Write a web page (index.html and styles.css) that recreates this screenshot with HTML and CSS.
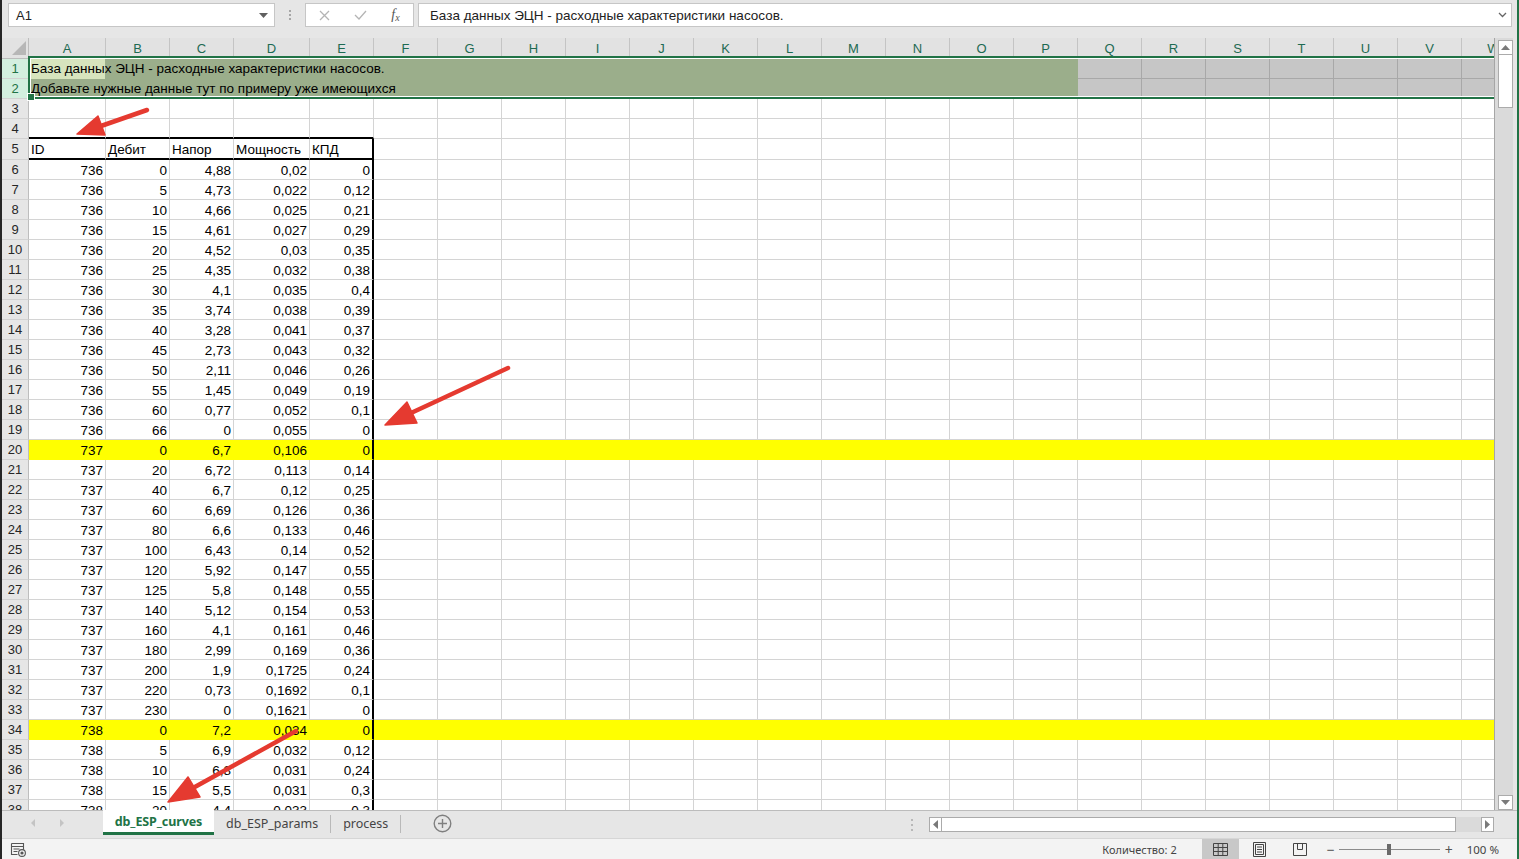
FILE: index.html
```html
<!DOCTYPE html>
<html lang="ru">
<head>
<meta charset="utf-8">
<title>db_ESP_curves</title>
<link rel="stylesheet" href="styles.css">
</head>
<body>
<div class="app">
  <div class="fbar">
    <div class="namebox"><span>A1</span><svg class="caret" width="9" height="5" viewBox="0 0 9 5"><path d="M0 0h9L4.5 5z"/></svg></div>
    <div class="fdots"><i></i><i></i><i></i></div>
    <div class="fbtns">
      <span class="fb"><svg width="11" height="11" viewBox="0 0 11 11"><path d="M1 1l9 9M10 1l-9 9"/></svg></span>
      <span class="fb"><svg width="13" height="10" viewBox="0 0 13 10"><path d="M1 5l4 4 7-8"/></svg></span>
      <span class="fb fx"><i>f</i><b>x</b></span>
    </div>
    <div class="finput"><span>База данных ЭЦН - расходные характеристики насосов.</span><svg width="9" height="6" viewBox="0 0 9 6"><path d="M1 1l3.5 3.5L8 1"/></svg></div>
  </div>

  <div class="main">
    <div class="sheet">
      <div class="colhead">
        <div class="corner"><svg width="26" height="20" viewBox="0 0 26 20"><path d="M24 3v14H10z"/></svg></div>
        <div class="ch ca">A</div><div class="ch cb">B</div><div class="ch cc">C</div><div class="ch cd">D</div><div class="ch ce">E</div>
        <div class="ch">F</div><div class="ch">G</div><div class="ch">H</div><div class="ch">I</div><div class="ch">J</div>
        <div class="ch">K</div><div class="ch">L</div><div class="ch">M</div><div class="ch">N</div><div class="ch">O</div>
        <div class="ch">P</div><div class="ch">Q</div><div class="ch">R</div><div class="ch">S</div><div class="ch">T</div>
        <div class="ch">U</div><div class="ch">V</div><div class="ch">W</div>
      </div>

      <div class="band">
        <div class="row"><div class="rh sel">1</div><div class="fill f1">База данных ЭЦН - расходные характеристики насосов.</div><div class="selgray g1"></div></div>
        <div class="row"><div class="rh sel">2</div><div class="fill">Добавьте нужные данные тут по примеру уже имеющихся</div><div class="selgray"></div></div>
      </div>

      <div class="row"><div class="rh">3</div><div class="c ca"></div><div class="c cb"></div><div class="c cc"></div><div class="c cd"></div><div class="c ce"></div><div class="rest"></div></div>
      <div class="row r4"><div class="rh">4</div><div class="c ca"></div><div class="c cb"></div><div class="c cc"></div><div class="c cd"></div><div class="c ce"></div><div class="rest"></div></div>
      <div class="row t r5"><div class="rh">5</div><div class="c ca">ID</div><div class="c cb">Дебит</div><div class="c cc">Напор</div><div class="c cd">Мощность</div><div class="c ce">КПД</div><div class="rest"></div></div>

      <div class="row t"><div class="rh">6</div><div class="c ca n">736</div><div class="c cb n">0</div><div class="c cc n">4,88</div><div class="c cd n">0,02</div><div class="c ce n">0</div><div class="rest"></div></div>
      <div class="row t"><div class="rh">7</div><div class="c ca n">736</div><div class="c cb n">5</div><div class="c cc n">4,73</div><div class="c cd n">0,022</div><div class="c ce n">0,12</div><div class="rest"></div></div>
      <div class="row t"><div class="rh">8</div><div class="c ca n">736</div><div class="c cb n">10</div><div class="c cc n">4,66</div><div class="c cd n">0,025</div><div class="c ce n">0,21</div><div class="rest"></div></div>
      <div class="row t"><div class="rh">9</div><div class="c ca n">736</div><div class="c cb n">15</div><div class="c cc n">4,61</div><div class="c cd n">0,027</div><div class="c ce n">0,29</div><div class="rest"></div></div>
      <div class="row t"><div class="rh">10</div><div class="c ca n">736</div><div class="c cb n">20</div><div class="c cc n">4,52</div><div class="c cd n">0,03</div><div class="c ce n">0,35</div><div class="rest"></div></div>
      <div class="row t"><div class="rh">11</div><div class="c ca n">736</div><div class="c cb n">25</div><div class="c cc n">4,35</div><div class="c cd n">0,032</div><div class="c ce n">0,38</div><div class="rest"></div></div>
      <div class="row t"><div class="rh">12</div><div class="c ca n">736</div><div class="c cb n">30</div><div class="c cc n">4,1</div><div class="c cd n">0,035</div><div class="c ce n">0,4</div><div class="rest"></div></div>
      <div class="row t"><div class="rh">13</div><div class="c ca n">736</div><div class="c cb n">35</div><div class="c cc n">3,74</div><div class="c cd n">0,038</div><div class="c ce n">0,39</div><div class="rest"></div></div>
      <div class="row t"><div class="rh">14</div><div class="c ca n">736</div><div class="c cb n">40</div><div class="c cc n">3,28</div><div class="c cd n">0,041</div><div class="c ce n">0,37</div><div class="rest"></div></div>
      <div class="row t"><div class="rh">15</div><div class="c ca n">736</div><div class="c cb n">45</div><div class="c cc n">2,73</div><div class="c cd n">0,043</div><div class="c ce n">0,32</div><div class="rest"></div></div>
      <div class="row t"><div class="rh">16</div><div class="c ca n">736</div><div class="c cb n">50</div><div class="c cc n">2,11</div><div class="c cd n">0,046</div><div class="c ce n">0,26</div><div class="rest"></div></div>
      <div class="row t"><div class="rh">17</div><div class="c ca n">736</div><div class="c cb n">55</div><div class="c cc n">1,45</div><div class="c cd n">0,049</div><div class="c ce n">0,19</div><div class="rest"></div></div>
      <div class="row t"><div class="rh">18</div><div class="c ca n">736</div><div class="c cb n">60</div><div class="c cc n">0,77</div><div class="c cd n">0,052</div><div class="c ce n">0,1</div><div class="rest"></div></div>
      <div class="row t"><div class="rh">19</div><div class="c ca n">736</div><div class="c cb n">66</div><div class="c cc n">0</div><div class="c cd n">0,055</div><div class="c ce n">0</div><div class="rest"></div></div>
      <div class="row t y"><div class="rh">20</div><div class="c ca n">737</div><div class="c cb n">0</div><div class="c cc n">6,7</div><div class="c cd n">0,106</div><div class="c ce n">0</div><div class="rest"></div></div>
      <div class="row t"><div class="rh">21</div><div class="c ca n">737</div><div class="c cb n">20</div><div class="c cc n">6,72</div><div class="c cd n">0,113</div><div class="c ce n">0,14</div><div class="rest"></div></div>
      <div class="row t"><div class="rh">22</div><div class="c ca n">737</div><div class="c cb n">40</div><div class="c cc n">6,7</div><div class="c cd n">0,12</div><div class="c ce n">0,25</div><div class="rest"></div></div>
      <div class="row t"><div class="rh">23</div><div class="c ca n">737</div><div class="c cb n">60</div><div class="c cc n">6,69</div><div class="c cd n">0,126</div><div class="c ce n">0,36</div><div class="rest"></div></div>
      <div class="row t"><div class="rh">24</div><div class="c ca n">737</div><div class="c cb n">80</div><div class="c cc n">6,6</div><div class="c cd n">0,133</div><div class="c ce n">0,46</div><div class="rest"></div></div>
      <div class="row t"><div class="rh">25</div><div class="c ca n">737</div><div class="c cb n">100</div><div class="c cc n">6,43</div><div class="c cd n">0,14</div><div class="c ce n">0,52</div><div class="rest"></div></div>
      <div class="row t"><div class="rh">26</div><div class="c ca n">737</div><div class="c cb n">120</div><div class="c cc n">5,92</div><div class="c cd n">0,147</div><div class="c ce n">0,55</div><div class="rest"></div></div>
      <div class="row t"><div class="rh">27</div><div class="c ca n">737</div><div class="c cb n">125</div><div class="c cc n">5,8</div><div class="c cd n">0,148</div><div class="c ce n">0,55</div><div class="rest"></div></div>
      <div class="row t"><div class="rh">28</div><div class="c ca n">737</div><div class="c cb n">140</div><div class="c cc n">5,12</div><div class="c cd n">0,154</div><div class="c ce n">0,53</div><div class="rest"></div></div>
      <div class="row t"><div class="rh">29</div><div class="c ca n">737</div><div class="c cb n">160</div><div class="c cc n">4,1</div><div class="c cd n">0,161</div><div class="c ce n">0,46</div><div class="rest"></div></div>
      <div class="row t"><div class="rh">30</div><div class="c ca n">737</div><div class="c cb n">180</div><div class="c cc n">2,99</div><div class="c cd n">0,169</div><div class="c ce n">0,36</div><div class="rest"></div></div>
      <div class="row t"><div class="rh">31</div><div class="c ca n">737</div><div class="c cb n">200</div><div class="c cc n">1,9</div><div class="c cd n">0,1725</div><div class="c ce n">0,24</div><div class="rest"></div></div>
      <div class="row t"><div class="rh">32</div><div class="c ca n">737</div><div class="c cb n">220</div><div class="c cc n">0,73</div><div class="c cd n">0,1692</div><div class="c ce n">0,1</div><div class="rest"></div></div>
      <div class="row t"><div class="rh">33</div><div class="c ca n">737</div><div class="c cb n">230</div><div class="c cc n">0</div><div class="c cd n">0,1621</div><div class="c ce n">0</div><div class="rest"></div></div>
      <div class="row t y"><div class="rh">34</div><div class="c ca n">738</div><div class="c cb n">0</div><div class="c cc n">7,2</div><div class="c cd n">0,034</div><div class="c ce n">0</div><div class="rest"></div></div>
      <div class="row t"><div class="rh">35</div><div class="c ca n">738</div><div class="c cb n">5</div><div class="c cc n">6,9</div><div class="c cd n">0,032</div><div class="c ce n">0,12</div><div class="rest"></div></div>
      <div class="row t"><div class="rh">36</div><div class="c ca n">738</div><div class="c cb n">10</div><div class="c cc n">6,8</div><div class="c cd n">0,031</div><div class="c ce n">0,24</div><div class="rest"></div></div>
      <div class="row t"><div class="rh">37</div><div class="c ca n">738</div><div class="c cb n">15</div><div class="c cc n">5,5</div><div class="c cd n">0,031</div><div class="c ce n">0,3</div><div class="rest"></div></div>
      <div class="row t"><div class="rh">38</div><div class="c ca n">738</div><div class="c cb n">20</div><div class="c cc n">4,4</div><div class="c cd n">0,033</div><div class="c ce n">0,3</div><div class="rest"></div></div>
    </div>

    <div class="vscroll">
      <div class="sbtn"><svg width="9" height="5" viewBox="0 0 9 5"><path d="M0 5h9L4.5 0z"/></svg></div>
      <div class="vthumb"></div>
      <div class="vtrack"></div>
      <div class="sbtn"><svg width="9" height="5" viewBox="0 0 9 5"><path d="M0 0h9L4.5 5z"/></svg></div>
    </div>
  </div>

  <div class="tabbar">
    <div class="tnav"><svg width="101" height="26" viewBox="0 0 101 26"><path d="M33 8v8l-4-4zM58 8v8l4-4z"/></svg></div>
    <div class="tab active">db_ESP_curves</div>
    <div class="tab">db_ESP_params</div>
    <div class="tsep"></div>
    <div class="tab">process</div>
    <div class="tsep"></div>
    <div class="plus"><svg width="19" height="19" viewBox="0 0 19 19"><circle cx="9.5" cy="9.5" r="8.3"/><path d="M9.5 5v9M5 9.5h9"/></svg></div>
    <div class="tspace"></div>
    <div class="hdots"><i></i><i></i><i></i></div>
    <div class="hscroll">
      <div class="hbtn"><svg width="5" height="9" viewBox="0 0 5 9"><path d="M5 0v9L0 4.5z"/></svg></div>
      <div class="hthumb"></div>
      <div class="htrack"></div>
      <div class="hbtn"><svg width="5" height="9" viewBox="0 0 5 9"><path d="M0 0v9l5-4.5z"/></svg></div>
    </div>
  </div>

  <div class="status">
    <svg class="sicon" width="17" height="15" viewBox="0 0 17 15"><path class="o" d="M1.5 1.5h12v9M1.5 1.5v11h6M1.5 4.5h12M3.5 7h6M3.5 9.5h4"/><circle class="o" cx="12" cy="11" r="3.4"/><circle class="d" cx="12" cy="11" r="1.6"/></svg>
    <div class="sspace"></div>
    <span class="count">Количество: 2</span>
    <div class="vbtn on"><svg width="15" height="13" viewBox="0 0 15 13"><path d="M.5 .5h14v12H.5zM5.2 .5v12M9.8 .5v12M.5 4.5h14M.5 8.5h14"/></svg></div>
    <div class="vbtn"><svg width="13" height="15" viewBox="0 0 13 15"><path d="M.5 .5h12v14H.5zM2.5 2.5h8v10h-8zM4 5h5M4 7.5h5M4 10h5"/></svg></div>
    <div class="vbtn"><svg width="14" height="13" viewBox="0 0 14 13"><path d="M.5 .5h13v12H.5zM4.5 .5v6h5v-6"/></svg></div>
    <span class="zm">−</span>
    <div class="zslider"><i class="zl"></i><i class="zt"></i><i class="zl"></i></div>
    <span class="zm">+</span>
    <span class="zpct">100 %</span>
  </div>

  <svg class="annot" width="1519" height="859" viewBox="0 0 1519 859">
    <g class="arrow">
      <line x1="147" y1="110" x2="101" y2="126"/>
      <polygon points="77,134 105,135 98,116"/>
      <line x1="508" y1="368" x2="411" y2="413"/>
      <polygon points="385,425 417,423 407,402"/>
      <line x1="296" y1="731" x2="193" y2="788"/>
      <polygon points="168,802 200,797 188,777"/>
    </g>
  </svg>
</div>
</body>
</html>
```

FILE: styles.css
```css
* { box-sizing: border-box; margin: 0; padding: 0; }

html, body {
  width: 1519px;
  height: 859px;
  overflow: hidden;
}

body {
  font-family: "Liberation Sans", Arial, sans-serif;
  font-size: 13.5px;
  color: #000;
  background: #e6e6e6;
}

.app {
  position: relative;
  width: 1519px;
  height: 859px;
  display: flex;
  flex-direction: column;
  background: #e6e6e6;
  border-left: 2px solid #262626;
  border-right: 2px solid #217346;
}

/* ---------- formula bar ---------- */
.fbar {
  height: 38px;
  flex: none;
  display: flex;
  align-items: flex-start;
  padding: 3px 5px 0 6px;
}

.namebox {
  width: 267px;
  height: 24px;
  background: #fff;
  border: 1px solid #c6c6c6;
  display: flex;
  align-items: center;
  justify-content: space-between;
  padding: 0 6px 0 7px;
  color: #222;
  font-size: 13px;
}

.namebox .caret { fill: #606060; }

.fdots {
  width: 30px;
  height: 24px;
  display: flex;
  flex-direction: column;
  align-items: center;
  justify-content: center;
  gap: 2px;
}

.fdots i, .hdots i {
  display: block;
  width: 2px;
  height: 2px;
  background: #a6a6a6;
}

.fbtns {
  width: 109px;
  height: 24px;
  background: #fff;
  border: 1px solid #c6c6c6;
  display: flex;
  align-items: center;
}

.fb {
  width: 36px;
  display: flex;
  align-items: center;
  justify-content: center;
}

.fb svg path {
  fill: none;
  stroke: #b4b4b4;
  stroke-width: 1.3;
}

.fx {
  font-family: "Liberation Serif", serif;
  color: #555;
  font-size: 14px;
  width: 35px;
}

.fx i { font-style: italic; }
.fx b { font-weight: normal; font-style: italic; font-size: 10px; margin-top: 5px; }

.finput {
  flex: 1;
  margin-left: 4px;
  height: 24px;
  background: #fff;
  border: 1px solid #c6c6c6;
  display: flex;
  align-items: center;
  justify-content: space-between;
  padding: 0 4px 0 11px;
  color: #222;
  font-size: 13.5px;
}

.finput svg path { fill: none; stroke: #666; stroke-width: 1.3; }

/* ---------- main sheet ---------- */
.main {
  flex: 1;
  display: flex;
  min-height: 0;
}

.sheet {
  width: 1492px;
  flex: none;
  overflow: hidden;
  background: #fff;
}

.colhead {
  display: flex;
  height: 21px;
  background: #e2e2e2;
  border-bottom: 1px solid #bdbdbd;
  font-size: 13px;
}

.corner {
  width: 27px;
  flex: none;
  border-right: 1px solid #bdbdbd;
}

.corner svg path { fill: #b7b7b7; }

.ch {
  flex: none;
  width: 64px;
  border-right: 1px solid #c4c4c4;
  text-align: center;
  line-height: 21px;
  color: #1d6a52;
}

.ca { width: 77px; }
.cb { width: 64px; }
.cc { width: 64px; }
.cd { width: 76px; }
.ce { width: 64px; }

.row {
  display: flex;
  height: 20px;
}

.rh {
  width: 27px;
  flex: none;
  background: #e6e6e6;
  border-right: 1px solid #bdbdbd;
  border-bottom: 1px solid #d2d2d2;
  text-align: center;
  line-height: 20px;
  color: #262626;
  font-size: 13px;
}

.rh.sel {
  background: #d3efdf;
  color: #217346;
}

.c {
  flex: none;
  background: #fff;
  border-right: 1px solid #d4d4d4;
  border-bottom: 1px solid #d4d4d4;
  line-height: 19px;
  padding: 1px 2px 0;
  white-space: nowrap;
  overflow: hidden;
}

.n { text-align: right; }

.rest {
  flex: 1;
  background: #fff repeating-linear-gradient(to right, transparent 0 63px, #d4d4d4 63px 64px);
  border-bottom: 1px solid #d4d4d4;
}

/* table borders */
.r4 .c { border-bottom: 2px solid #000; }
.r5 { height: 21px; }
.r5 .c { border-bottom: 2px solid #000; }
.t .ce { border-right: 2px solid #000; }

/* highlighted rows */
.y .c, .y .rest {
  background: #ffff00;
  border-bottom-color: #ffff00;
  border-right-color: #ffff00;
}

.y .ce { border-right-color: #000; }

/* selected band rows 1-2 */
.band {
  position: relative;
}

.band::after {
  content: "";
  position: absolute;
  left: 26px;
  top: -3px;
  right: -10px;
  bottom: 0;
  border: 2px solid #217346;
  box-shadow: inset 0 0 0 1px #fff;
  z-index: 2;
}

.band::before {
  content: "";
  position: absolute;
  left: 25px;
  bottom: -2px;
  width: 6px;
  height: 6px;
  background: #217346;
  border: 1px solid #fff;
  z-index: 3;
}

.fill {
  width: 1049px;
  flex: none;
  background: #9bae8b;
  line-height: 20px;
  padding-left: 2px;
  white-space: nowrap;
}

.fill.f1 {
  background: linear-gradient(to right, #d7e4bd 0 76px, #9bae8b 76px);
}

.selgray {
  flex: 1;
  background: #c6c6c6 repeating-linear-gradient(to right, transparent 0 63px, #a8a8a8 63px 64px);
}

.selgray.g1 { border-bottom: 1px solid #a8a8a8; }

/* vertical scrollbar */
.vscroll {
  width: 23px;
  flex: none;
  display: flex;
  flex-direction: column;
  background: #dadada;
  border-left: 1px solid #a6a6a6;
  border-right: 4px solid #e6e6e6;
  padding: 2px 0 0 3px;
}

.sbtn {
  width: 15px;
  height: 15px;
  flex: none;
  background: #fff;
  border: 1px solid #ababab;
  display: flex;
  align-items: center;
  justify-content: center;
}

.sbtn svg path, .hbtn svg path { fill: #7a7a7a; }

.vthumb {
  width: 15px;
  height: 53px;
  flex: none;
  background: #fff;
  border: 1px solid #ababab;
  border-top: none;
}

.vtrack { flex: 1; }

/* ---------- sheet tabs ---------- */
.tabbar {
  height: 28px;
  flex: none;
  display: flex;
  align-items: flex-start;
  background: #e6e6e6;
  border-top: 1px solid #bcbcbc;
  font-family: "Noto Sans", "Open Sans", sans-serif;
  font-size: 12.5px;
}

.tnav { width: 101px; flex: none; }
.tnav svg path { fill: #c4c4c4; }

.tab {
  height: 26px;
  line-height: 25px;
  padding: 0 12px;
  color: #444;
  white-space: nowrap;
}

.tab.active {
  width: 111px;
  margin-top: -1px;
  height: 25px;
  line-height: 24px;
  padding: 0;
  text-align: center;
  background: #fff;
  border-bottom: 3px solid #217346;
  color: #217346;
  font-weight: 700;
  font-size: 12.5px;
  letter-spacing: -0.1px;
}

.tsep {
  width: 1px;
  height: 18px;
  margin-top: 4px;
  background: #b9b9b9;
}

.plus {
  margin: 3px 0 0 32px;
}

.plus svg circle, .plus svg path {
  fill: none;
  stroke: #7f7f7f;
  stroke-width: 1.4;
}

.tspace { flex: 1; }

.hdots {
  display: flex;
  flex-direction: column;
  gap: 3px;
  margin: 8px 16px 0 0;
}

.hdots i { background: #b8b8b8; }

.hscroll {
  width: 565px;
  height: 15px;
  margin: 6px 23px 0 0;
  display: flex;
  background: #dadada;
}

.hbtn {
  width: 13px;
  height: 15px;
  flex: none;
  background: #fff;
  border: 1px solid #ababab;
  display: flex;
  align-items: center;
  justify-content: center;
}

.hthumb {
  width: 514px;
  flex: none;
  background: #fff;
  border: 1px solid #ababab;
  border-left: none;
}

.htrack { flex: 1; }

/* ---------- status bar ---------- */
.status {
  height: 21px;
  flex: none;
  display: flex;
  align-items: center;
  background: #f3f3f3;
  border-top: 1px solid #d6d6d6;
  font-family: "Noto Sans", "Open Sans", sans-serif;
  font-size: 11px;
  color: #444;
}

.sicon { margin-left: 8px; }
.sicon .o { fill: none; stroke: #555; stroke-width: 1.1; }
.sicon circle.o { fill: #f3f3f3; }
.sicon .d { fill: #555; }

.sspace { flex: 1; }

.count { margin-right: 25px; }

.vbtn {
  width: 40px;
  height: 20px;
  display: flex;
  align-items: center;
  justify-content: center;
}

.vbtn.on {
  width: 37px;
  background: #c8c8c8;
  margin-right: 1px;
}

.vbtn svg path {
  fill: none;
  stroke: #444;
  stroke-width: 1;
}

.zm {
  width: 12px;
  text-align: center;
  font-size: 14px;
  color: #555;
  margin-left: 5px;
}

.zslider {
  width: 101px;
  margin-left: 2px;
  display: flex;
  align-items: center;
}

.zl {
  flex: 1;
  height: 1px;
  background: #8c8c8c;
}

.zt {
  width: 4px;
  height: 11px;
  background: #6a6a6a;
}

.zslider + .zm { margin-left: 3px; }

.zpct {
  margin-left: 12px;
  margin-right: 18px;
  font-size: 11.5px;
}

/* ---------- annotation arrows ---------- */
.annot {
  position: absolute;
  left: -2px;
  top: 0;
  pointer-events: none;
  z-index: 10;
}

.arrow line {
  stroke: #e53a30;
  stroke-width: 4.5;
  stroke-linecap: round;
}

.arrow polygon {
  fill: #e53a30;
  stroke: #e53a30;
  stroke-width: 1.5;
  stroke-linejoin: round;
}
```
